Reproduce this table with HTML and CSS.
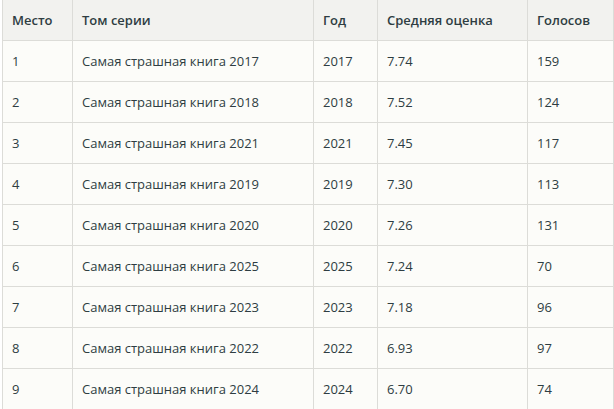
FILE: index.html
```html
<!DOCTYPE html>
<html lang="ru">
<head>
<meta charset="utf-8">
<link rel="stylesheet" href="styles.css">
</head>
<body>
<table class="rating">
  <colgroup>
    <col class="c-place"><col class="c-title"><col class="c-year"><col class="c-score"><col class="c-votes">
  </colgroup>
  <thead>
    <tr><th>Место</th><th>Том серии</th><th>Год</th><th>Средняя оценка</th><th>Голосов</th></tr>
  </thead>
  <tbody>
    <tr><td>1</td><td>Самая страшная книга 2017</td><td>2017</td><td>7.74</td><td>159</td></tr>
    <tr><td>2</td><td>Самая страшная книга 2018</td><td>2018</td><td>7.52</td><td>124</td></tr>
    <tr><td>3</td><td>Самая страшная книга 2021</td><td>2021</td><td>7.45</td><td>117</td></tr>
    <tr><td>4</td><td>Самая страшная книга 2019</td><td>2019</td><td>7.30</td><td>113</td></tr>
    <tr><td>5</td><td>Самая страшная книга 2020</td><td>2020</td><td>7.26</td><td>131</td></tr>
    <tr><td>6</td><td>Самая страшная книга 2025</td><td>2025</td><td>7.24</td><td>70</td></tr>
    <tr><td>7</td><td>Самая страшная книга 2023</td><td>2023</td><td>7.18</td><td>96</td></tr>
    <tr><td>8</td><td>Самая страшная книга 2022</td><td>2022</td><td>6.93</td><td>97</td></tr>
    <tr><td>9</td><td>Самая страшная книга 2024</td><td>2024</td><td>6.70</td><td>74</td></tr>
  </tbody>
</table>
</body>
</html>
```
FILE: styles.css
```css
html, body {
  margin: 0;
  padding: 0;
  background: #ffffff;
}
.rating {
  margin-left: 2px;
  width: 611px;
  border-collapse: collapse;
  table-layout: fixed;
  font-family: "Open Sans", sans-serif;
  font-size: 13px;
  color: #2e3d42;
}
.c-place { width: 70px; }
.c-title { width: 241px; }
.c-year { width: 64px; }
.c-score { width: 150px; }
.c-votes { width: 86px; }
.rating th, .rating td {
  border: 1px solid #dcdcd8;
  padding: 0 9px;
  text-align: left;
  box-sizing: border-box;
}
.rating thead th {
  height: 40px;
  border-top: none;
  background: #f2f2ef;
  font-weight: 600;
}
.rating tbody td {
  height: 41px;
  background: #fcfcf9;
  font-weight: 400;
}
```
